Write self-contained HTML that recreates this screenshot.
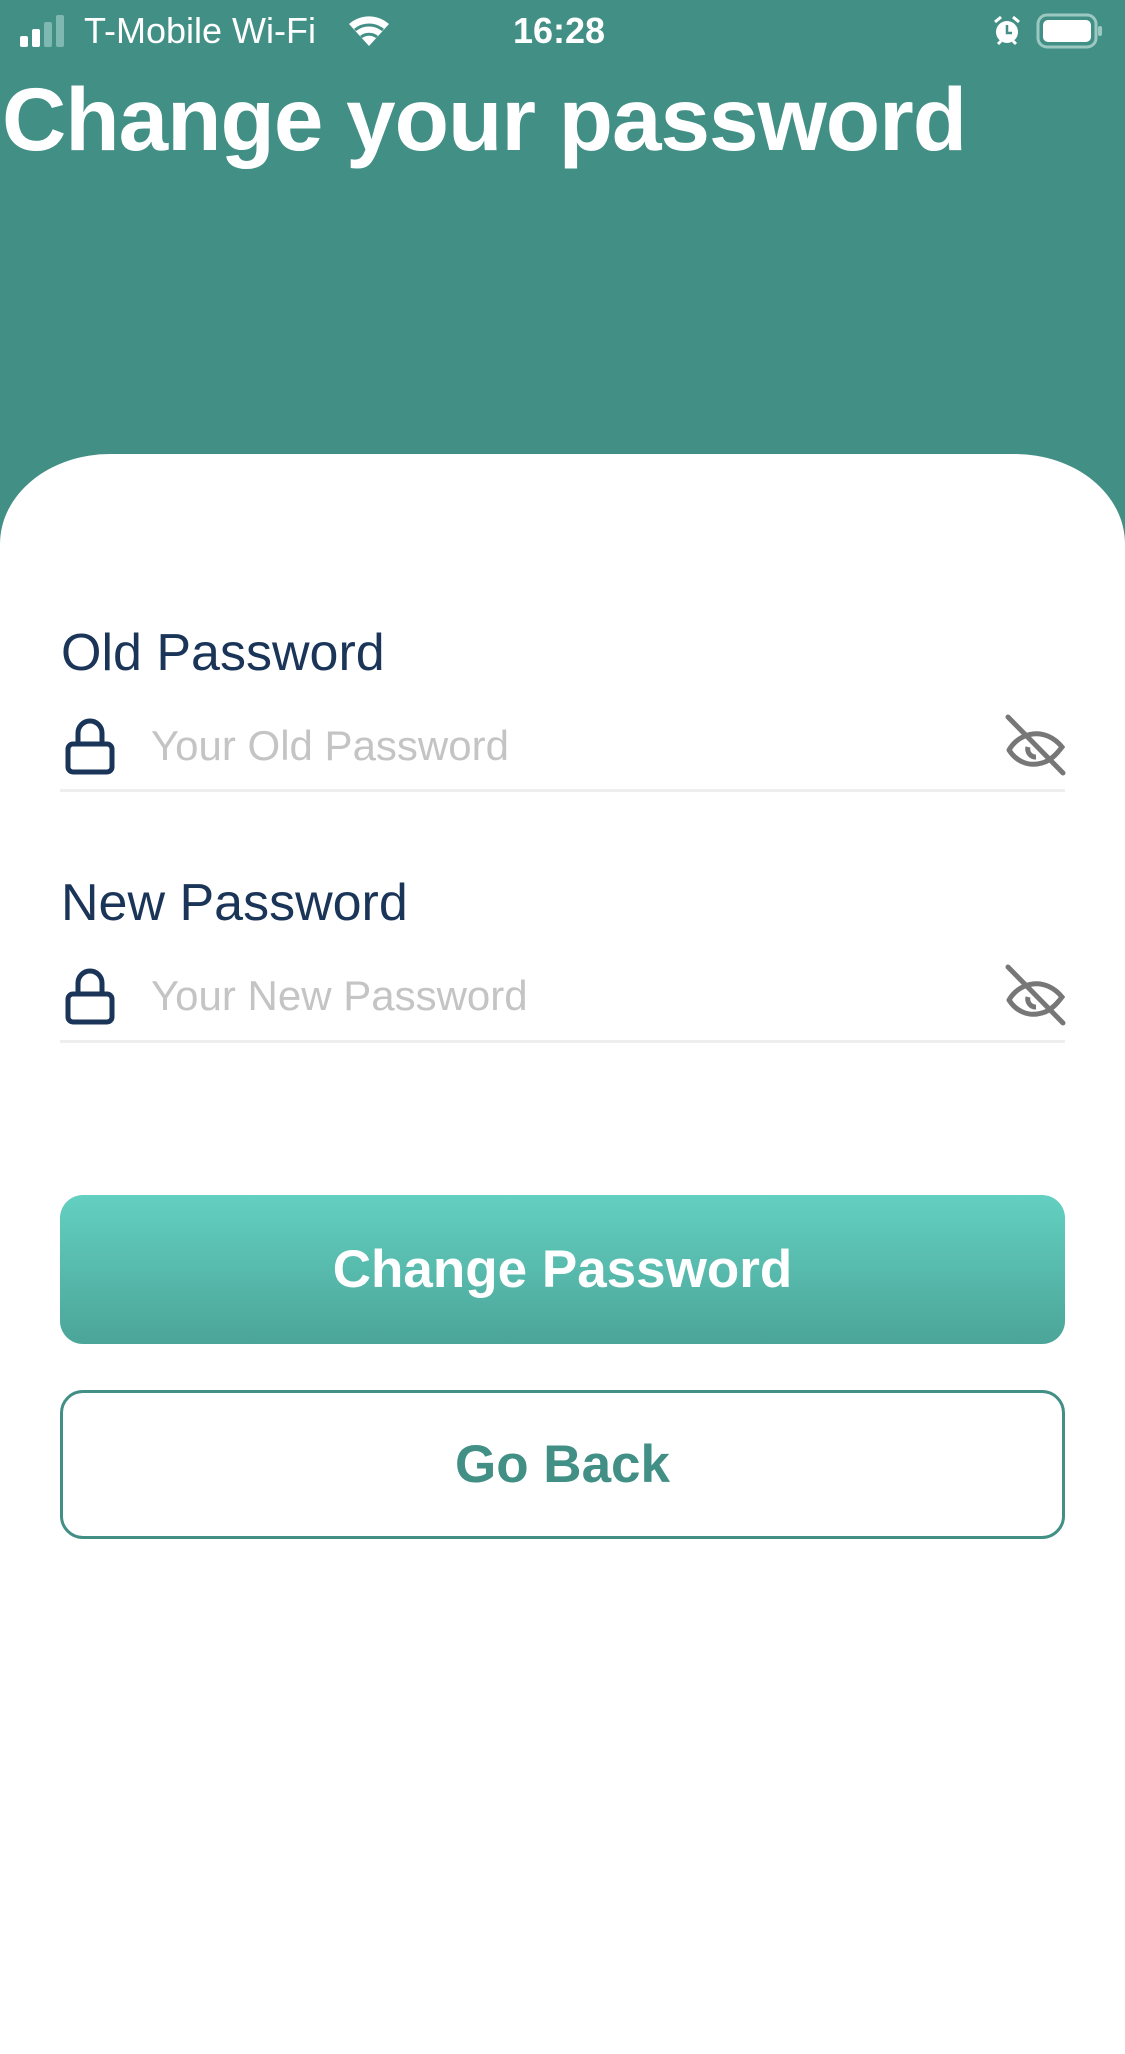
<!DOCTYPE html>
<html><head><meta charset="utf-8"><style>
*{margin:0;padding:0;box-sizing:border-box}
body{width:1125px;height:2001px;background:#fff;font-family:"Liberation Sans",sans-serif;position:relative;overflow:hidden}
.hdr{position:absolute;left:0;top:0;width:1125px;height:560px;background:#428f85}
.card{position:absolute;left:0;top:454px;width:1125px;height:1600px;background:#fff;border-radius:110px 110px 0 0/90px 90px 0 0}
.abs{position:absolute;white-space:nowrap}
.title{left:2px;top:64px;font-size:89px;font-weight:bold;color:#fff;letter-spacing:-1px;line-height:110px}
.sb{color:#fff;font-size:36px;line-height:40px}
.label{left:61px;font-size:52px;color:#1a3558;line-height:60px}
.ph{left:151px;font-size:42px;color:#c4c4c4;line-height:48px}
.line{position:absolute;left:60px;width:1005px;height:3px;background:#eeeeee}
.btn{position:absolute;left:60px;width:1005px;border-radius:23px;display:flex;align-items:center;justify-content:center;font-weight:bold;font-size:53px}
</style></head><body>
<div class="hdr"></div>
<div class="card"></div>
<svg class="abs" style="left:20px;top:14px" width="52" height="34"><rect x="0" y="22" width="8" height="11" rx="2" fill="#fff"/><rect x="12" y="15" width="8" height="18" rx="2" fill="#fff"/><rect x="24" y="8" width="8" height="25" rx="2" fill="#7fb8b0"/><rect x="36" y="1" width="8" height="32" rx="2" fill="#7fb8b0"/></svg>
<div class="abs sb" style="left:84px;top:11px">T-Mobile Wi-Fi</div>
<svg class="abs" style="left:345px;top:12px" width="48" height="36" viewBox="0 0 48 36"><path d="M24 34 L4 12 A30 30 0 0 1 44 12 Z" fill="#fff"/><path d="M10 18 A22 22 0 0 1 38 18" stroke="#428f85" stroke-width="3" fill="none"/><path d="M16 25 A13 13 0 0 1 32 25" stroke="#428f85" stroke-width="3" fill="none"/></svg>
<div class="abs sb" style="left:513px;top:11px;font-weight:bold">16:28</div>
<svg class="abs" style="left:992px;top:14px" width="30" height="34"><circle cx="15" cy="18" r="11" fill="#fff"/><path d="M15 11v8h5" stroke="#428f85" stroke-width="2.5" fill="none"/><path d="M3 8l6-5M27 8l-6-5M6 30l3-3M24 30l-3-3" stroke="#fff" stroke-width="3"/></svg>
<svg class="abs" style="left:1036px;top:13px" width="68" height="36"><rect x="2" y="2" width="58" height="32" rx="9" fill="none" stroke="#9cc8c2" stroke-width="3"/><rect x="7" y="7" width="48" height="22" rx="5" fill="#fff"/><rect x="62" y="13" width="4" height="10" rx="2" fill="#9cc8c2"/></svg>
<div class="abs title">Change your password</div>

<div class="abs label" style="top:623px">Old Password</div>
<svg class="abs" style="left:62px;top:717px" width="56" height="58" viewBox="0 0 56 58"><path d="M16 26V16a12 12 0 0 1 24 0v10" fill="none" stroke="#1a3558" stroke-width="5"/><rect x="6" y="27" width="44" height="28" rx="5" fill="none" stroke="#1a3558" stroke-width="5"/></svg>
<div class="abs ph" style="top:722px">Your Old Password</div>
<svg class="abs" style="left:1000px;top:713px" width="68" height="66" viewBox="0 0 68 66"><path d="M9 37 C20 18 46 14 62 34 C56 42 50 48 42 50" fill="none" stroke="#777" stroke-width="5" stroke-linecap="round"/><path d="M9 37 C16 48 28 54 42 50" fill="none" stroke="#777" stroke-width="5"/><path d="M28 34 A8 8 0 0 0 36 44" fill="none" stroke="#777" stroke-width="5"/><path d="M8 4 L63 60" stroke="#777" stroke-width="5" stroke-linecap="round"/></svg>
<div class="line" style="top:789px"></div>

<div class="abs label" style="top:873px">New Password</div>
<svg class="abs" style="left:62px;top:967px" width="56" height="58" viewBox="0 0 56 58"><path d="M16 26V16a12 12 0 0 1 24 0v10" fill="none" stroke="#1a3558" stroke-width="5"/><rect x="6" y="27" width="44" height="28" rx="5" fill="none" stroke="#1a3558" stroke-width="5"/></svg>
<div class="abs ph" style="top:972px">Your New Password</div>
<svg class="abs" style="left:1000px;top:963px" width="68" height="66" viewBox="0 0 68 66"><path d="M9 37 C20 18 46 14 62 34 C56 42 50 48 42 50" fill="none" stroke="#777" stroke-width="5" stroke-linecap="round"/><path d="M9 37 C16 48 28 54 42 50" fill="none" stroke="#777" stroke-width="5"/><path d="M28 34 A8 8 0 0 0 36 44" fill="none" stroke="#777" stroke-width="5"/><path d="M8 4 L63 60" stroke="#777" stroke-width="5" stroke-linecap="round"/></svg>
<div class="line" style="top:1040px"></div>

<div class="btn" style="top:1195px;height:149px;background:linear-gradient(#63d0c1,#4ba598);color:#fff">Change Password</div>
<div class="btn" style="top:1390px;height:149px;border:3px solid #428f85;color:#428f85">Go Back</div>
</body></html>
